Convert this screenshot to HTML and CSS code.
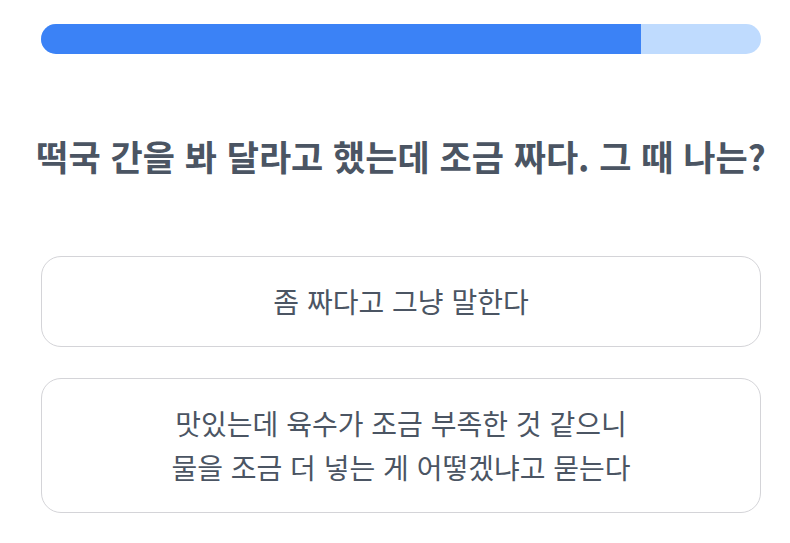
FILE: index.html
```html
<!DOCTYPE html>
<html lang="ko">
<head>
    <meta charset="UTF-8">
    <meta name="viewport" content="width=device-width, initial-scale=1.0">
    <title>Quiz</title>
    <link rel="stylesheet" href="styles.css">
</head>
<body>
    <main class="quiz">
        <div class="progress">
            <div class="progress-fill" style="width: 83.4%;"></div>
        </div>

        <h2 class="question">떡국 간을 봐 달라고 했는데 조금 짜다. 그 때 나는?</h2>

        <div class="options">
            <button class="option">좀 짜다고 그냥 말한다</button>
            <button class="option">맛있는데 육수가 조금 부족한 것 같으니<br>물을 조금 더 넣는 게 어떻겠냐고 묻는다</button>
        </div>
    </main>
</body>
</html>
```

FILE: styles.css
```css
body {
    font-family: "Noto Sans CJK KR", "Noto Sans", sans-serif;
    margin: 0;
    padding: 0;
    background-color: #fff;
    color: #4b5563;
}
.quiz {
    width: 720px;
    margin-left: 41px;
    padding-top: 24px;
}
.progress {
    height: 30px;
    background-color: #bfdbfe;
    border-radius: 15px;
    overflow: hidden;
}
.progress-fill {
    height: 100%;
    background-color: #3b82f6;
}
.question {
    margin: 78px -40px 0;
    font-size: 35px;
    font-weight: 700;
    line-height: 48px;
    text-align: center;
}
.options {
    display: flex;
    flex-direction: column;
    gap: 31px;
    margin-top: 76px;
}
.option {
    font-family: inherit;
    font-size: 28px;
    line-height: 44px;
    color: #4b5563;
    background-color: #fff;
    border: 1px solid #d4d4d8;
    border-radius: 20px;
    padding: 22px 20px 23px;
    text-align: center;
    cursor: pointer;
}
```
